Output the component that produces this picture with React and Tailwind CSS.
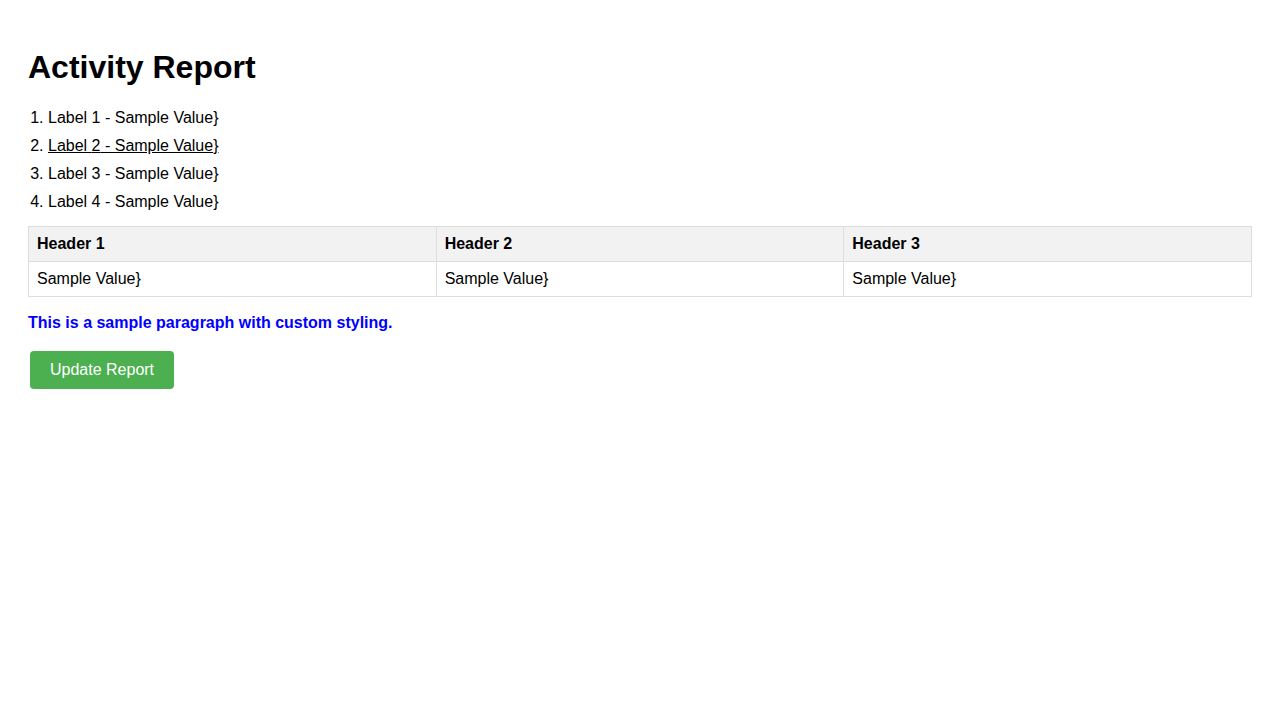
import React from "react";

const items = [1, 2, 3, 4];
const headers = ["Header 1", "Header 2", "Header 3"];

export default function App() {
  return (
    <div className="min-h-screen bg-white px-[28px] pt-[28px] text-black font-['Liberation_Sans',Arial,sans-serif] text-[16px] leading-[18px]">
      <h1 className="text-[32px] font-bold mt-[21.44px] leading-[normal]">Activity Report</h1>
      <ol className="list-decimal pl-[20px] mt-[22.4px] mb-[15px]">
        {items.map((n) => (
          <li key={n} className={n === 4 ? "" : "mb-[10px]"}>
            <span className={n === 2 ? "underline" : ""}>
              Label {n} - Sample Value{"}"}
            </span>
          </li>
        ))}
      </ol>
      <table className="w-full border-collapse table-fixed">
        <thead>
          <tr className="bg-[#f2f2f2]">
            {headers.map((h) => (
              <th key={h} className="border border-[#ddd] p-[8px] text-left font-bold">
                {h}
              </th>
            ))}
          </tr>
        </thead>
        <tbody>
          <tr>
            {headers.map((h) => (
              <td key={h} className="border border-[#ddd] p-[8px] text-left">
                Sample Value{"}"}
              </td>
            ))}
          </tr>
        </tbody>
      </table>
      <p className="mt-[17px] mb-[16px] text-[#0000ff] font-bold">
        This is a sample paragraph with custom styling.
      </p>
      <button className="ml-[2px] mt-[3px] bg-[#4CAF50] text-white px-[20px] py-[10px] rounded-[4px] leading-[18px] text-[16px]">
        Update Report
      </button>
    </div>
  );
}
